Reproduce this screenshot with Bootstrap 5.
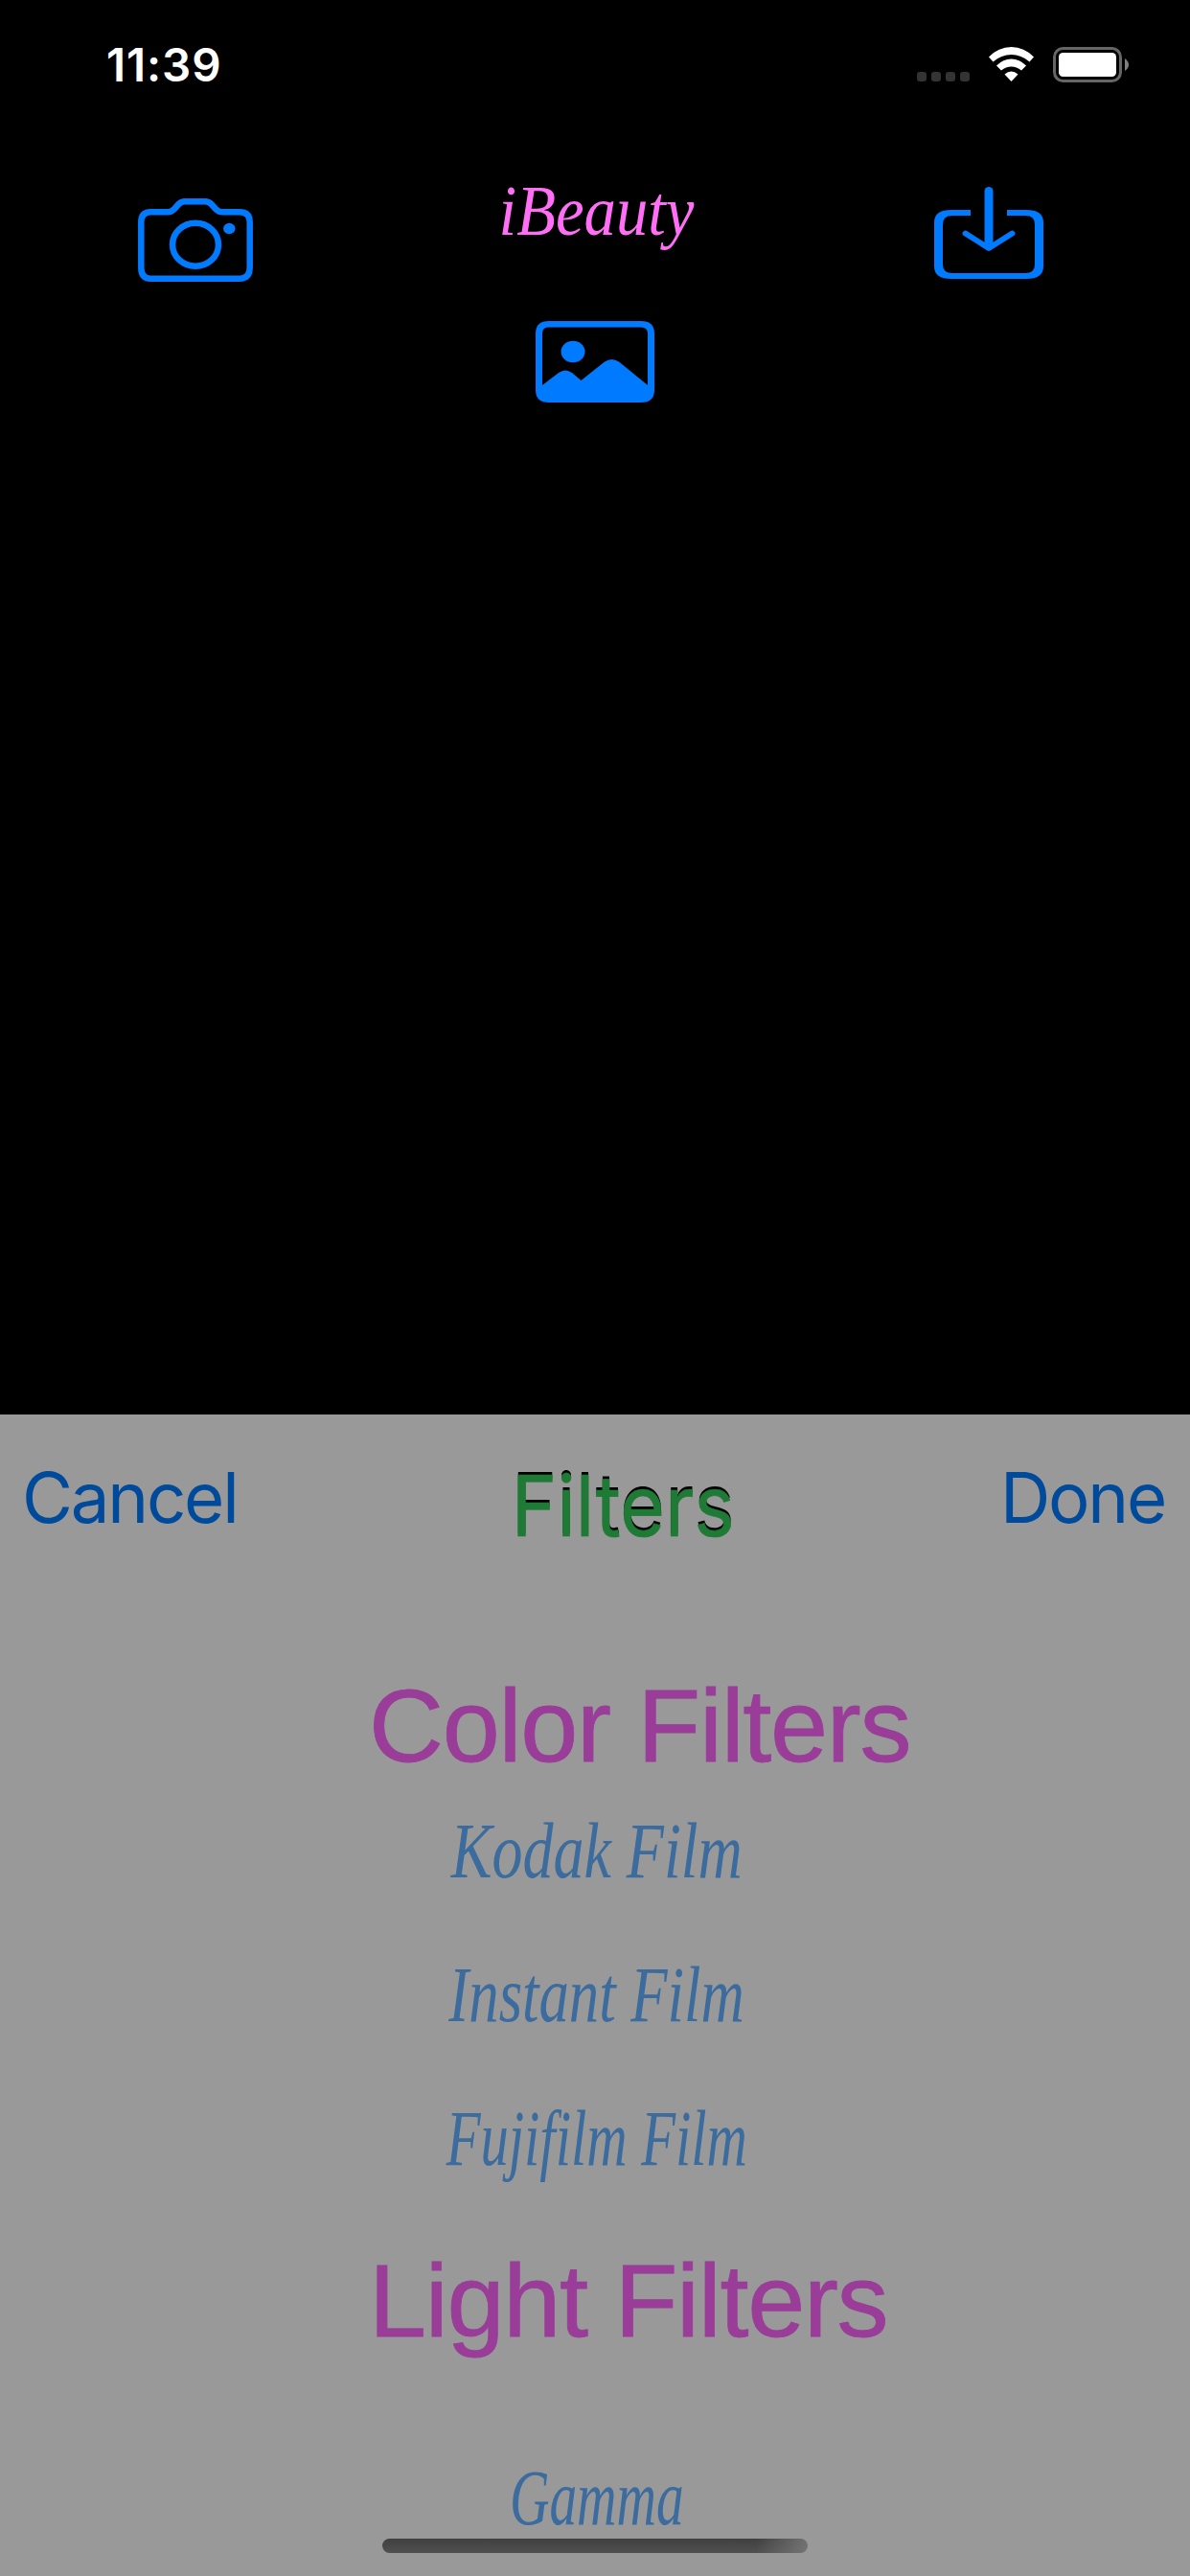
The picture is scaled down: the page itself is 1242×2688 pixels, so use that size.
<!DOCTYPE html>
<html lang="en">
<head>
<meta charset="utf-8">
<meta name="viewport" content="width=device-width, initial-scale=1">
<title>iBeauty</title>
<link href="https://cdn.jsdelivr.net/npm/bootstrap@5.3.0/dist/css/bootstrap.min.css" rel="stylesheet">
<style>
body{background:#000;width:1242px;height:2688px;overflow:hidden;font-family:Inter,"Liberation Sans",sans-serif}
svg{display:block;flex:none}
.stage{height:1476px}
.status{height:135px;padding:38px 63px 0 111px}
.signals{margin-top:10px}
.clock{font-size:47.500px;font-weight:600;line-height:60px;color:#fff;letter-spacing:.9px}
.tools{padding:0 153px 0 144px;color:#007aff}
.camera{margin-top:72px}
.center-stack{padding:35px 0 0 3px}
.download{margin-top:60px}
.picture{margin-top:65px}
.brand{font:italic 75px/100px "Liberation Serif",serif;color:#ff6ff5;height:100px;transform:translateX(2px) scaleX(.89);white-space:nowrap}
.sheet{background:#999;height:1212px}
.sheet-bar{height:263px;padding:37px 26px 0 23px;color:#004a9b}
.action{font-size:72.5px;line-height:100px;letter-spacing:-2.2px}
.sheet-title{font-size:88px;line-height:100px;color:#1f7a36;text-shadow:0 -3px 0 #000;-webkit-text-stroke:.7px #1f7a36;transform:translateX(5px) scaleX(.915);padding-top:8px}
.group-title{font:400 108px/119px "Liberation Sans",sans-serif;color:#993d99;letter-spacing:-1.3px;-webkit-text-stroke:.8px #993d99;padding:2px 0 0 385px;height:119px;margin:0;white-space:nowrap}
.group-title.later{padding-top:33px;height:150px}
.option{height:150px;font:italic 82px/148px "Liberation Serif",serif;color:#3c6b9d;white-space:nowrap;padding-left:3px}
.option span{display:inline-block}
.option.spaced{margin-top:75px}
.n1{transform:scaleX(.78)}.n2{transform:scaleX(.765)}.n3{transform:scaleX(.715)}.n4{transform:scaleX(.7)}
.home{left:399px;top:2649px;width:444px;height:15px;border-radius:8px;background:linear-gradient(90deg,transparent 88%,rgba(125,125,125,.8)),linear-gradient(#404040,#505050)}
</style>
</head>
<body class="position-relative">
<main class="d-flex flex-column">
<section class="stage">
  <div class="status d-flex justify-content-between align-items-start">
    <div class="clock">11:39</div>
    <svg class="signals" width="222" height="40" viewBox="957 48 222 40">
      <g fill="#333"><rect x="957" y="75" width="10" height="10" rx="3"/><rect x="972" y="75" width="10" height="10" rx="3"/><rect x="987" y="75" width="10" height="10" rx="3"/><rect x="1002" y="75" width="10" height="10" rx="3"/></g>
      <g fill="#fff"><path d="M1032 59.500Q1042 49 1055.500 49T1079 59.500L1074.500 64.500Q1066 57 1055.500 57T1036.500 64.500Z"/><path d="M1040 68.500Q1047 61.500 1055.500 61.500T1071 68.500L1066 73.500Q1061 69.500 1055.500 69.500T1045 73.500Z"/><path d="M1048.500 77.500Q1055.500 71.500 1062.500 77.500L1055.500 85Z"/><rect x="1105" y="55" width="60" height="25" rx="4.500"/></g>
      <rect x="1100.500" y="50.500" width="69" height="34" rx="9" fill="none" stroke="#666" stroke-width="3"/>
      <path d="M1174 61Q1178 64 1178 67.500T1174 74Z" fill="#808080"/>
    </svg>
  </div>
  <div class="tools d-flex justify-content-between align-items-start">
    <svg class="camera" width="120" height="87" viewBox="144 207 120 87" fill="none" stroke="currentColor" stroke-width="6.500">
      <path d="M157 221.200H175Q179 221.200 182 218L186 213.500Q189 210.200 193 210.200H214Q218 210.200 221 213.500L225 218Q228 221.200 232 221.200H250Q260.700 221.200 260.700 232V279Q260.700 290.700 250 290.700H157Q147.300 290.700 147.300 279V232Q147.300 221.200 157 221.200Z"/>
      <ellipse cx="204" cy="255.300" rx="24" ry="22.500"/><ellipse cx="239.300" cy="238.500" rx="6.200" ry="5.700" fill="currentColor" stroke="none"/>
    </svg>
    <div class="center-stack d-flex flex-column align-items-center">
      <div class="brand">iBeauty</div>
      <svg class="picture" width="124" height="85" viewBox="559 335 124 85" fill="currentColor">
        <path fill-rule="evenodd" d="M573 335H669Q683 335 683 348V407Q683 420 669 420H573Q559 420 559 407V348Q559 335 573 335ZM572 341.500Q566 341.500 566 348V402L583 389Q590 384 597 389L606.500 397L631 377.500Q638.500 372.500 646 377.500L676 402V348Q676 341.500 669 341.500Z"/>
        <ellipse cx="598" cy="367" rx="12.500" ry="11.300"/>
      </svg>
    </div>
    <svg class="download" width="114" height="96" viewBox="975 195 114 96" fill="none" stroke="currentColor">
      <path fill="currentColor" stroke="none" d="M1013 219H993Q975 219 975 232V278Q975 291 993 291H1071Q1089 291 1089 278V232Q1089 219 1071 219H1051V225H1070Q1080 225 1080 234V276Q1080 285 1070 285H994Q984 285 984 276V234Q984 225 994 225H1013Z"/>
      <path d="M1032 199.500V256" stroke-width="9" stroke-linecap="round"/><path d="M1007.500 243.500L1032 259L1056.500 243.500" stroke-width="5.800" stroke-linecap="round" stroke-linejoin="round"/>
    </svg>
  </div>
</section>
<section class="sheet">
  <div class="sheet-bar d-flex justify-content-between align-items-start">
    <div class="action">Cancel</div><div class="sheet-title">Filters</div><div class="action">Done</div>
  </div>
  <h2 class="group-title">Color Filters</h2>
  <div class="option text-center"><span class="n1">Kodak Film</span></div>
  <div class="option text-center"><span class="n2">Instant Film</span></div>
  <div class="option text-center"><span class="n3">Fujifilm Film</span></div>
  <h2 class="group-title later">Light Filters</h2>
  <div class="option spaced text-center"><span class="n4">Gamma</span></div>
</section>
</main>
<div class="home position-absolute"></div>
<script src="https://cdn.jsdelivr.net/npm/bootstrap@5.3.0/dist/js/bootstrap.bundle.min.js"></script>
</body>
</html>
